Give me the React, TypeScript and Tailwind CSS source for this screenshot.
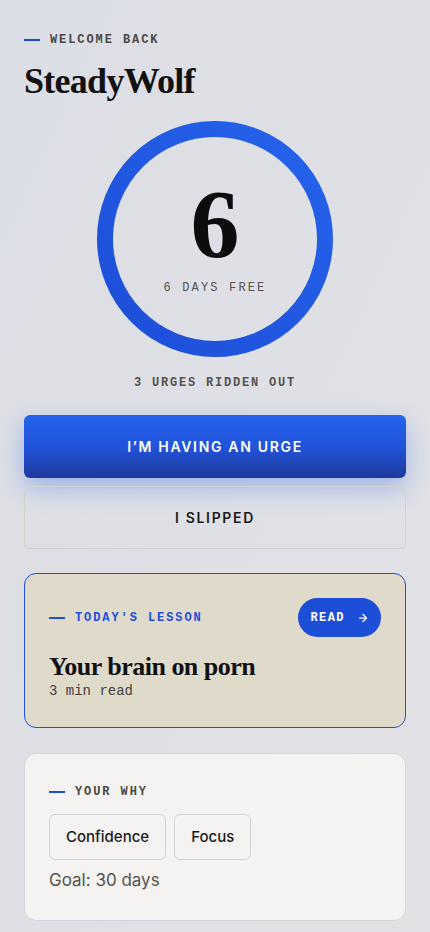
import { ArrowRight } from 'lucide-react';

const serif = { fontFamily: '"Liberation Serif", "DejaVu Serif", serif' };

function Label({ children, blue = false }: { children: string; blue?: boolean }) {
  return (
    <div className="flex items-center gap-2.5">
      <span className="block w-4 h-[2px] bg-[#1d4ed8]" />
      <span
        className={`font-['Liberation_Mono',monospace] text-[12px] font-bold tracking-[0.16em] ${blue ? 'text-[#1d4ed8]' : 'text-[#4a4744]'}`}
      >
        {children}
      </span>
    </div>
  );
}

export default function App() {
  return (
    <div className="min-h-[932px] w-full bg-gradient-to-br from-[#dcdee5] via-[#dfe0e6] to-[#e2e2e6] px-6 pt-[31px] pb-6 font-['Inter',sans-serif]">
      <Label>WELCOME BACK</Label>
      <h1 className="mt-[13px] text-[36px] leading-[38px] font-bold tracking-[-0.02em] text-[#111]" style={serif}>
        SteadyWolf
      </h1>

      {/* streak ring */}
      <div className="mt-[21px] flex justify-center">
        <div className="relative w-[236px] h-[236px]">
          <svg viewBox="0 0 236 236" className="absolute inset-0 w-full h-full">
            <defs>
              <linearGradient id="ring" x1="1" y1="0" x2="0" y2="1">
                <stop offset="0%" stopColor="#2563eb" />
                <stop offset="100%" stopColor="#1d4ed8" />
              </linearGradient>
            </defs>
            <circle cx="118" cy="118" r="110" fill="none" stroke="url(#ring)" strokeWidth="16" />
          </svg>
          <div className="absolute inset-0 flex flex-col items-center justify-center">
            <span className="text-[98px] leading-none font-bold text-[#0c0c0c] mt-[-6px]" style={serif}>
              6
            </span>
            <span className="mt-[6px] font-['Liberation_Mono',monospace] text-[12px] tracking-[0.18em] text-[#55524e]">
              6 DAYS FREE
            </span>
          </div>
        </div>
      </div>

      <p className="mt-[17px] text-center font-['Liberation_Mono',monospace] text-[12px] font-bold tracking-[0.15em] text-[#55524e]">
        3 URGES RIDDEN OUT
      </p>

      <div className="mt-[23px] flex flex-col gap-2">
        <button className="h-[63px] w-full rounded-md bg-gradient-to-b from-[#2563eb] via-[#2153db] to-[#1e3a9a] text-white text-[14px] font-semibold tracking-[0.12em] shadow-[0_10px_24px_rgba(37,99,235,0.35)]">
          I’M HAVING AN URGE
        </button>
        <button className="h-[63px] w-full rounded-md border border-[#d2d0cb] text-[#1a1a1a] text-[14px] font-semibold tracking-[0.12em]">
          I SLIPPED
        </button>
      </div>

      {/* lesson */}
      <div className="mt-[24px] rounded-xl border border-[#1d4ed8] bg-[#e0dacb] px-6 pt-6 pb-[26px]">
        <div className="flex items-center justify-between">
          <Label blue>TODAY'S LESSON</Label>
          <button className="flex items-center gap-3 h-[39px] pl-[12px] pr-[12px] rounded-full bg-[#1d4ed8] text-white font-['Liberation_Mono',monospace] text-[12px] font-bold tracking-[0.12em]">
            READ
            <ArrowRight className="w-3 h-3" strokeWidth={2.5} />
          </button>
        </div>
        <h2 className="mt-[16px] text-[26px] leading-[28px] font-bold tracking-[-0.02em] text-[#111]" style={serif}>
          Your brain on porn
        </h2>
        <p className="font-['Liberation_Mono',monospace] text-[14px] leading-[20px] text-[#44413d]">3 min read</p>
      </div>

      {/* why */}
      <div className="mt-[25px] rounded-xl border border-[#d6d6d6] bg-[#f4f3f1] px-6 pt-[29px] pb-[26px]">
        <Label>YOUR WHY</Label>
        <div className="mt-[13px] flex gap-2">
          <span className="flex items-center h-[46px] px-4 rounded-md border border-[#d4d2cf] text-[15px] font-medium text-[#1a1a1a]">
            Confidence
          </span>
          <span className="flex items-center h-[46px] px-4 rounded-md border border-[#d4d2cf] text-[15px] font-medium text-[#1a1a1a]">
            Focus
          </span>
        </div>
        <p className="mt-[8px] text-[17px] text-[#555250]">Goal: 30 days</p>
      </div>
    </div>
  );
}
